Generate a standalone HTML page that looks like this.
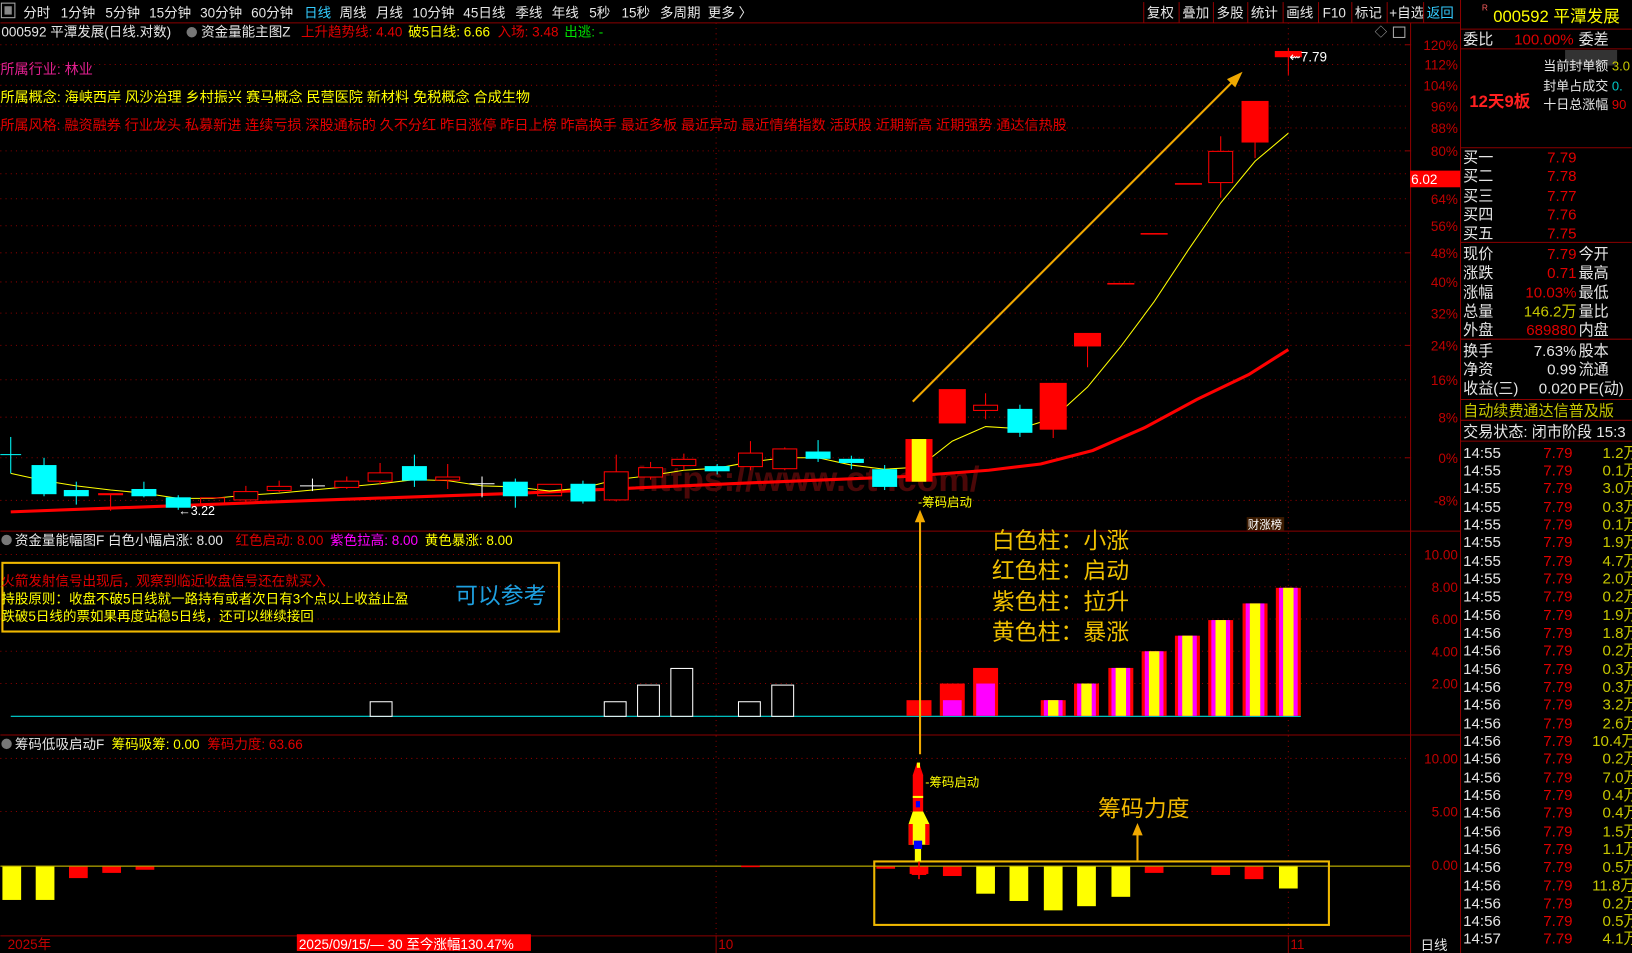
<!DOCTYPE html>
<html><head><meta charset="utf-8"><style>
html,body{margin:0;padding:0;background:#000;overflow:hidden}
svg{display:block}
text{font-family:"Liberation Sans","Noto Sans CJK SC",sans-serif}
</style></head><body>
<svg width="1632" height="953" viewBox="0 0 1568 916" xmlns="http://www.w3.org/2000/svg">
<rect width="1568" height="916" fill="#000"/>
<!-- toolbar -->
<g font-size="13" fill="#e6e6e6">
<rect x="1" y="3" width="13" height="14" fill="none" stroke="#aaa"/><rect x="4" y="6" width="7" height="8" fill="#888"/>
<text x="22" y="17">分时</text><text x="58" y="17">1分钟</text><text x="101" y="17">5分钟</text><text x="143" y="17">15分钟</text><text x="192" y="17">30分钟</text><text x="241" y="17">60分钟</text>
<text x="292" y="17" fill="#33ccff">日线</text><text x="326" y="17">周线</text><text x="361" y="17">月线</text><text x="396" y="17">10分钟</text><text x="445" y="17">45日线</text><text x="495" y="17">季线</text><text x="530" y="17">年线</text><text x="566" y="17">5秒</text><text x="597" y="17">15秒</text><text x="634" y="17">多周期</text><text x="680" y="17">更多 〉</text>
<text x="1102" y="17">复权</text><text x="1136" y="17">叠加</text><text x="1169" y="17">多股</text><text x="1202" y="17">统计</text><text x="1236" y="17">画线</text><text x="1271" y="17">F10</text><text x="1302" y="17">标记</text><text x="1335" y="17">+自选</text><text x="1371" y="17" fill="#33ccff">返回</text>
</g>
<g stroke="#8b0000" stroke-width="1">
<line x1="0" y1="22" x2="1403" y2="22"/>
<line x1="1099" y1="2" x2="1099" y2="22"/><line x1="1133" y1="2" x2="1133" y2="22"/><line x1="1166" y1="2" x2="1166" y2="22"/><line x1="1199" y1="2" x2="1199" y2="22"/><line x1="1233" y1="2" x2="1233" y2="22"/><line x1="1267" y1="2" x2="1267" y2="22"/><line x1="1299" y1="2" x2="1299" y2="22"/><line x1="1333" y1="2" x2="1333" y2="22"/><line x1="1368" y1="2" x2="1368" y2="22"/>
<line x1="1355.5" y1="22" x2="1355.5" y2="916"/>
<line x1="1403.5" y1="0" x2="1403.5" y2="916"/>
<line x1="0" y1="510.5" x2="1403" y2="510.5"/>
<line x1="0" y1="706.5" x2="1403" y2="706.5"/>
<line x1="0" y1="899.5" x2="1355" y2="899.5"/>
</g>
<!-- grid dotted -->
<g stroke="#8b0000" stroke-dasharray="1,4" stroke-width="1">
<line x1="0" y1="43" x2="1355" y2="43"/><line x1="0" y1="62" x2="1355" y2="62"/><line x1="0" y1="82" x2="1355" y2="82"/><line x1="0" y1="102" x2="1355" y2="102"/><line x1="0" y1="123" x2="1355" y2="123"/><line x1="0" y1="145" x2="1355" y2="145"/><line x1="0" y1="167" x2="1355" y2="167"/><line x1="0" y1="191" x2="1355" y2="191"/><line x1="0" y1="217" x2="1355" y2="217"/><line x1="0" y1="243" x2="1355" y2="243"/><line x1="0" y1="271" x2="1355" y2="271"/><line x1="0" y1="301" x2="1355" y2="301"/><line x1="0" y1="332" x2="1355" y2="332"/><line x1="0" y1="365" x2="1355" y2="365"/><line x1="0" y1="401" x2="1355" y2="401"/><line x1="0" y1="440" x2="1355" y2="440"/><line x1="0" y1="481" x2="1355" y2="481"/>
<line x1="0" y1="533" x2="1355" y2="533"/><line x1="0" y1="564" x2="1355" y2="564"/><line x1="0" y1="595" x2="1355" y2="595"/><line x1="0" y1="626" x2="1355" y2="626"/><line x1="0" y1="657" x2="1355" y2="657"/>
<line x1="0" y1="729" x2="1355" y2="729"/><line x1="0" y1="780" x2="1355" y2="780"/>
<line x1="688" y1="22" x2="688" y2="899"/><line x1="1238" y1="22" x2="1238" y2="899"/>
</g>
<!-- axis labels -->
<g font-size="13" fill="#c00000" text-anchor="end">
<text x="1401" y="48">120%</text><text x="1401" y="67">112%</text><text x="1401" y="87">104%</text><text x="1401" y="107">96%</text><text x="1401" y="128">88%</text><text x="1401" y="150">80%</text><text x="1401" y="196">64%</text><text x="1401" y="222">56%</text><text x="1401" y="248">48%</text><text x="1401" y="276">40%</text><text x="1401" y="306">32%</text><text x="1401" y="337">24%</text><text x="1401" y="370">16%</text><text x="1401" y="406">8%</text><text x="1401" y="445">0%</text><text x="1401" y="486">-8%</text>
<text x="1401" y="538">10.00</text><text x="1401" y="569">8.00</text><text x="1401" y="600">6.00</text><text x="1401" y="631">4.00</text><text x="1401" y="662">2.00</text>
<text x="1401" y="734">10.00</text><text x="1401" y="785">5.00</text><text x="1401" y="836">0.00</text>
</g>
<rect x="1355" y="164" width="48" height="16" fill="#ff0000"/><text x="1356" y="177" font-size="13" fill="#fff">6.02</text>
<g stroke="#8b0000"><line x1="1350" y1="43" x2="1356" y2="43"/><line x1="1350" y1="145" x2="1356" y2="145"/><line x1="1350" y1="243" x2="1356" y2="243"/><line x1="1350" y1="332" x2="1356" y2="332"/><line x1="1350" y1="440" x2="1356" y2="440"/></g>
<text x="1321" y="35" font-size="12" fill="#aaa">◇</text><rect x="1339" y="26" width="11" height="10" fill="none" stroke="#aaa"/>
<!-- header texts -->
<g font-size="13">
<text x="1" y="35" fill="#e6e6e6">000592 平潭发展(日线.对数)</text>
<circle cx="184" cy="31" r="5" fill="#777"/>
<text x="193" y="35" fill="#e6e6e6">资金量能主图Z</text>
<text x="289" y="35" fill="#e00000">上升趋势线: 4.40</text>
<text x="392" y="35" fill="#ffff00">破5日线: 6.66</text>
<text x="478" y="35" fill="#e00000">入场: 3.48</text>
<text x="542" y="35" fill="#00e000">出逃: -</text>
</g>
<g font-size="13.6">
<text x="0" y="71" fill="#e0208f">所属行业: 林业</text>
<text x="0" y="98" fill="#ffff00">所属概念: 海峡西岸 风沙治理 乡村振兴 赛马概念 民营医院 新材料 免税概念 合成生物</text>
<text x="0" y="125" fill="#e00000" textLength="1025" lengthAdjust="spacing">所属风格: 融资融券 行业龙头 私募新进 连续亏损 深股通标的 久不分红 昨日涨停 昨日上榜 昨高换手 最近多板 最近异动 最近情绪指数 活跃股 近期新高 近期强势 通达信热股</text>
</g>
<!-- watermark -->
<text x="612" y="472" font-size="34" fill="#4a0808" font-weight="bold">https://www.ct        .com/</text>
<!-- trend red line -->
<polyline fill="none" stroke="#ff0000" stroke-width="3" points="10,492 170,486 300,481 500,474 700,465 870,458 950,452 1000,446 1050,433 1100,411 1150,384 1200,360 1238,336"/>
<!-- MA5 -->
<polyline fill="none" stroke="#ffff00" stroke-width="1" points="10,455 42,462 73,467 106,471 138,474 171,479 204,479 236,476 268,474 300,471 333,468 365,465 398,461 430,462 463,467 495,468 528,472 560,469 592,461 625,457 657,452 689,450 721,444 754,440 786,440 818,447 850,451 883,449 915,424 947,410 980,412 1012,402 1045,372 1077,333 1109,290 1142,240 1173,195 1206,155 1238,128"/>
<!-- candles -->
<g stroke-width="1">
<g stroke="#00ffff"><line x1="10" y1="420" x2="10" y2="455"/><line x1="0" y1="437" x2="20" y2="437"/></g>
<line x1="42" y1="440" x2="42" y2="477" stroke="#00ffff"/><rect x="30" y="447" width="24" height="28" fill="#00ffff"/>
<line x1="73" y1="463" x2="73" y2="485" stroke="#00ffff"/><rect x="61" y="471" width="24" height="6" fill="#00ffff"/>
<line x1="106" y1="475" x2="106" y2="491" stroke="#ff0000"/><rect x="94" y="474" width="24" height="2" fill="#ff0000"/>
<line x1="138" y1="463" x2="138" y2="478" stroke="#00ffff"/><rect x="126" y="470" width="24" height="7" fill="#00ffff"/>
<line x1="171" y1="476" x2="171" y2="490" stroke="#00ffff"/><rect x="159" y="478" width="24" height="10" fill="#00ffff"/>
<g fill="none" stroke="#ff0000">
<rect x="192.5" y="478.5" width="23" height="6"/>
<line x1="236" y1="467" x2="236" y2="484"/><rect x="224.5" y="472.5" width="23" height="8" fill="#000"/>
<line x1="268" y1="462" x2="268" y2="473"/><rect x="256.5" y="467.5" width="23" height="4" fill="#000"/>
<line x1="333" y1="458" x2="333" y2="470"/><rect x="321.5" y="462.5" width="23" height="6" fill="#000"/>
<line x1="365" y1="445" x2="365" y2="466"/><rect x="353.5" y="454.5" width="23" height="8" fill="#000"/>
<line x1="430" y1="446" x2="430" y2="470"/><rect x="418.5" y="458.5" width="23" height="3" fill="#000"/>
<rect x="516.5" y="465.5" width="23" height="11"/>
<line x1="592" y1="437" x2="592" y2="482"/><rect x="580.5" y="453.5" width="23" height="27" fill="#000"/>
<line x1="625" y1="444" x2="625" y2="461"/><rect x="613.5" y="449.5" width="23" height="9" fill="#000"/>
<line x1="657" y1="436" x2="657" y2="452"/><rect x="645.5" y="441.5" width="23" height="6" fill="#000"/>
<line x1="721" y1="424" x2="721" y2="452"/><rect x="709.5" y="435.5" width="23" height="13" fill="#000"/>
<line x1="754" y1="430" x2="754" y2="452"/><rect x="742.5" y="431.5" width="23" height="19" fill="#000"/>
<line x1="947" y1="378" x2="947" y2="403"/><rect x="935.5" y="389.5" width="23" height="5" fill="#000"/>
<line x1="1173" y1="131" x2="1173" y2="190"/><rect x="1161.5" y="145.5" width="23" height="30" fill="#000"/>
</g>
<g stroke="#fff"><line x1="300" y1="460" x2="300" y2="472"/><line x1="288" y1="467" x2="312" y2="467"/><line x1="463" y1="458" x2="463" y2="478"/><line x1="451" y1="465" x2="475" y2="465"/></g>
<line x1="398" y1="437" x2="398" y2="468" stroke="#00ffff"/><rect x="386" y="448" width="24" height="14" fill="#00ffff"/>
<line x1="495" y1="460" x2="495" y2="488" stroke="#00ffff"/><rect x="483" y="463" width="24" height="14" fill="#00ffff"/>
<line x1="560" y1="462" x2="560" y2="484" stroke="#00ffff"/><rect x="548" y="465" width="24" height="17" fill="#00ffff"/>
<line x1="689" y1="446" x2="689" y2="456" stroke="#00ffff"/><rect x="677" y="448" width="24" height="5" fill="#00ffff"/>
<line x1="786" y1="423" x2="786" y2="444" stroke="#00ffff"/><rect x="774" y="434" width="24" height="7" fill="#00ffff"/>
<line x1="818" y1="438" x2="818" y2="451" stroke="#00ffff"/><rect x="806" y="441" width="24" height="4" fill="#00ffff"/>
<line x1="850" y1="447" x2="850" y2="471" stroke="#00ffff"/><rect x="838" y="451" width="24" height="17" fill="#00ffff"/>
<rect x="870" y="422" width="26" height="41" fill="#ff0000"/><rect x="876" y="422" width="14" height="41" fill="#ffff00"/>
<rect x="902" y="374" width="26" height="33" fill="#ff0000"/>
<line x1="980" y1="389" x2="980" y2="420" stroke="#00ffff"/><rect x="968" y="393" width="24" height="23" fill="#00ffff"/>
<line x1="1012" y1="368" x2="1012" y2="421" stroke="#ff0000"/><rect x="999" y="368" width="26" height="45" fill="#ff0000"/>
<line x1="1045" y1="333" x2="1045" y2="353" stroke="#ff0000"/><rect x="1032" y="320" width="26" height="13" fill="#ff0000"/>
<rect x="1064" y="272" width="26" height="1.5" fill="#ff0000"/>
<rect x="1096" y="224" width="26" height="1.5" fill="#ff0000"/>
<rect x="1129" y="176" width="26" height="1.5" fill="#ff0000"/>
<line x1="1206" y1="137" x2="1206" y2="152" stroke="#ff0000"/><rect x="1193" y="97" width="26" height="40" fill="#ff0000"/>
<line x1="1238" y1="46" x2="1238" y2="72" stroke="#ff0000"/><rect x="1225" y="49" width="26" height="6" fill="#ff0000"/>
</g>
<text x="1239" y="59" font-size="13" fill="#fff">⇜7.79</text>
<text x="171" y="495" font-size="12" fill="#fff">←3.22</text>
<!-- orange arrow -->
<line x1="877" y1="386" x2="1188" y2="75" stroke="#f0a800" stroke-width="2"/>
<polygon points="1194,69 1179,76 1187,84" fill="#f0a800"/>
<text x="882" y="487" font-size="12" fill="#ffff00">-筹码启动</text>
<rect x="1198" y="497" width="36" height="13" fill="#3a1a00"/><text x="1199" y="508" font-size="11" fill="#fff">财涨榜</text>
<!-- volume pane -->
<g font-size="13">
<circle cx="6" cy="519" r="5" fill="#777"/>
<text x="14" y="524" fill="#e6e6e6">资金量能幅图F 白色小幅启涨: 8.00</text>
<text x="226" y="524" fill="#e00000">红色启动: 8.00</text>
<text x="317" y="524" fill="#ff00ff">紫色拉高: 8.00</text>
<text x="408" y="524" fill="#ffff00">黄色暴涨: 8.00</text>
</g>
<rect x="2" y="541" width="535" height="66" fill="none" stroke="#f0b800" stroke-width="2"/>
<g font-size="13">
<text x="1" y="563" fill="#e00000">火箭发射信号出现后，观察到临近收盘信号还在就买入</text>
<text x="1" y="580" fill="#ffff00">持股原则：收盘不破5日线就一路持有或者次日有3个点以上收益止盈</text>
<text x="1" y="597" fill="#ffff00">跌破5日线的票如果再度站稳5日线，还可以继续接回</text>
</g>
<text x="437" y="580" font-size="22" fill="#1ea0e0">可以参考</text>
<g font-size="22" fill="#f0c000">
<text x="953" y="527">白色柱：小涨</text>
<text x="953" y="556">红色柱：启动</text>
<text x="953" y="586">紫色柱：拉升</text>
<text x="953" y="615">黄色柱：暴涨</text>
</g>
<line x1="10" y1="688.5" x2="1250" y2="688.5" stroke="#00d8d8"/>
<g fill="#000" stroke="#fff">
<rect x="355.5" y="674.5" width="21" height="14"/><rect x="580.5" y="674.5" width="21" height="14"/><rect x="612.5" y="658.5" width="21" height="30"/><rect x="644.5" y="642.5" width="21" height="46"/><rect x="709.5" y="674.5" width="21" height="14"/><rect x="741.5" y="658.5" width="21" height="30"/>
</g>
<rect x="871" y="673" width="24" height="15" fill="#ff0000"/>
<rect x="903" y="657" width="24" height="31" fill="#ff0000"/><rect x="906" y="673" width="18" height="15" fill="#ff00ff"/>
<rect x="935" y="642" width="24" height="46" fill="#ff0000"/><rect x="938" y="657" width="18" height="31" fill="#ff00ff"/>
<g>
<rect x="1000" y="673" width="24" height="15" fill="#ff0000"/><rect x="1003" y="673" width="18" height="15" fill="#ff00ff"/><rect x="1007" y="673" width="10" height="15" fill="#ffff00"/>
<rect x="1032" y="657" width="24" height="31" fill="#ff0000"/><rect x="1035" y="657" width="18" height="31" fill="#ff00ff"/><rect x="1039" y="657" width="10" height="31" fill="#ffff00"/>
<rect x="1065" y="642" width="24" height="46" fill="#ff0000"/><rect x="1068" y="642" width="18" height="46" fill="#ff00ff"/><rect x="1072" y="642" width="10" height="46" fill="#ffff00"/>
<rect x="1097" y="626" width="24" height="62" fill="#ff0000"/><rect x="1100" y="626" width="18" height="62" fill="#ff00ff"/><rect x="1104" y="626" width="10" height="62" fill="#ffff00"/>
<rect x="1129" y="611" width="24" height="77" fill="#ff0000"/><rect x="1132" y="611" width="18" height="77" fill="#ff00ff"/><rect x="1136" y="611" width="10" height="77" fill="#ffff00"/>
<rect x="1161" y="596" width="24" height="92" fill="#ff0000"/><rect x="1164" y="596" width="18" height="92" fill="#ff00ff"/><rect x="1168" y="596" width="10" height="92" fill="#ffff00"/>
<rect x="1194" y="580" width="24" height="108" fill="#ff0000"/><rect x="1197" y="580" width="18" height="108" fill="#ff00ff"/><rect x="1201" y="580" width="10" height="108" fill="#ffff00"/>
<rect x="1226" y="565" width="24" height="123" fill="#ff0000"/><rect x="1229" y="565" width="18" height="123" fill="#ff00ff"/><rect x="1233" y="565" width="10" height="123" fill="#ffff00"/>
</g>
<!-- vertical arrow -->
<line x1="884" y1="500" x2="884" y2="725" stroke="#f0a800" stroke-width="2"/>
<polygon points="884,490 879,502 889,502" fill="#f0a800"/>
<!-- third pane -->
<g font-size="13">
<circle cx="6" cy="715" r="5" fill="#777"/>
<text x="14" y="720" fill="#e6e6e6">筹码低吸启动F</text>
<text x="107" y="720" fill="#ffff00">筹码吸筹: 0.00</text>
<text x="199" y="720" fill="#e00000">筹码力度: 63.66</text>
</g>
<line x1="0" y1="832.5" x2="1355" y2="832.5" stroke="#e0d000"/>
<rect x="2" y="833" width="18" height="32" fill="#ffff00"/><rect x="34" y="833" width="18" height="32" fill="#ffff00"/>
<rect x="66" y="833" width="18" height="11" fill="#ff0000"/><rect x="98" y="833" width="18" height="6" fill="#ff0000"/><rect x="130" y="833" width="18" height="3" fill="#ff0000"/>
<rect x="712" y="832" width="18" height="1.5" fill="#ff0000"/>
<rect x="842" y="833" width="18" height="2" fill="#ff0000"/>
<rect x="874" y="833" width="18" height="7" fill="#ff0000"/>
<rect x="906" y="833" width="18" height="9" fill="#ff0000"/>
<rect x="938" y="833" width="18" height="26" fill="#ffff00"/>
<rect x="970" y="833" width="18" height="33" fill="#ffff00"/>
<rect x="1003" y="833" width="18" height="42" fill="#ffff00"/>
<rect x="1035" y="833" width="18" height="38" fill="#ffff00"/>
<rect x="1068" y="833" width="18" height="29" fill="#ffff00"/>
<rect x="1100" y="833" width="18" height="6" fill="#ff0000"/>
<rect x="1164" y="833" width="18" height="8" fill="#ff0000"/>
<rect x="1196" y="833" width="18" height="12" fill="#ff0000"/>
<rect x="1229" y="833" width="18" height="21" fill="#ffff00"/>
<rect x="840" y="828" width="437" height="61" fill="none" stroke="#f0b800" stroke-width="2"/>
<!-- rocket -->
<g>
<line x1="883" y1="733" x2="883" y2="845" stroke="#ff0000" stroke-width="1.5"/>
<polygon points="883,733 887,745 887,780 877,780 877,745 881,733" fill="#ff0000"/>
<rect x="881" y="733" width="3" height="5" fill="#ffff00"/>
<rect x="877" y="765" width="10" height="2" fill="#ffff00"/>
<rect x="880" y="770" width="4" height="6" fill="#0000ff"/>
<polygon points="877,780 887,780 893,792 893,812 873,812 873,792" fill="#ffff00"/>
<rect x="873" y="792" width="4" height="20" fill="#ff0000"/><rect x="889" y="792" width="4" height="20" fill="#ff0000"/>
<rect x="878" y="808" width="8" height="8" fill="#0000ff"/>
<rect x="879" y="816" width="6" height="12" fill="#ffff00"/>
<rect x="876" y="835" width="14" height="6" fill="#ff0000"/>
</g>
<text x="889" y="756" font-size="12" fill="#ffff00">-筹码启动</text>
<text x="1055" y="785" font-size="22" fill="#f0b800">筹码力度</text>
<line x1="1093" y1="800" x2="1093" y2="827" stroke="#f0a800" stroke-width="2"/>
<polygon points="1093,791 1088,803 1098,803" fill="#f0a800"/>
<!-- bottom axis -->
<text x="7" y="912" font-size="13" fill="#c00000">2025年</text>
<rect x="285" y="898" width="225" height="16" fill="#ff0000"/>
<text x="287" y="912" font-size="13" fill="#fff">2025/09/15/— 30 至今涨幅130.47%</text>
<line x1="688" y1="899" x2="688" y2="916" stroke="#8b0000"/><text x="690" y="912" font-size="13" fill="#c00000">10</text>
<line x1="1238" y1="899" x2="1238" y2="916" stroke="#8b0000"/><text x="1240" y="912" font-size="13" fill="#c00000">11</text>
<text x="1365" y="913" font-size="13" fill="#e6e6e6">日线</text>
<!-- right panel -->
<text x="1424" y="10" font-size="8" fill="#ff6060">R</text>
<text x="1435" y="21" font-size="16" fill="#ffff00">000592 平潭发展</text>
<g stroke="#8b0000"><line x1="1403" y1="28" x2="1568" y2="28"/><line x1="1403" y1="47" x2="1568" y2="47"/><line x1="1403" y1="142" x2="1568" y2="142"/><line x1="1403" y1="233" x2="1568" y2="233"/><line x1="1403" y1="326" x2="1568" y2="326"/><line x1="1403" y1="384" x2="1568" y2="384"/><line x1="1403" y1="404" x2="1568" y2="404"/><line x1="1403" y1="424" x2="1568" y2="424"/></g>
<g font-size="14.5">
<text x="1406" y="43" fill="#e6e6e6">委比</text><text x="1455" y="43" fill="#e00000">100.00%</text><text x="1517" y="43" fill="#e6e6e6">委差</text>
</g>
<path d="M1554 48 h-50 v10 q0 5 5 5 h40 q5 0 5 -5z" fill="#333"/>
<text x="1412" y="103" font-size="16" font-weight="bold" fill="#ff2020">12天9板</text>
<g font-size="12.5" fill="#e6e6e6">
<text x="1483" y="68">当前封单额 <tspan fill="#c8c800">3.0</tspan></text>
<text x="1483" y="87">封单占成交 <tspan fill="#00c8c8">0.</tspan></text>
<text x="1483" y="105">十日总涨幅 <tspan fill="#e00000">90</tspan></text>
</g>
<g font-size="14.5" fill="#e6e6e6">
<text x="1406" y="156">买一</text><text x="1406" y="174">买二</text><text x="1406" y="193">买三</text><text x="1406" y="211">买四</text><text x="1406" y="229">买五</text>
<text x="1406" y="249">现价</text><text x="1406" y="267">涨跌</text><text x="1406" y="286">涨幅</text><text x="1406" y="304">总量</text><text x="1406" y="322">外盘</text>
<text x="1517" y="249">今开</text><text x="1517" y="267">最高</text><text x="1517" y="286">最低</text><text x="1517" y="304">量比</text><text x="1517" y="322">内盘</text>
<text x="1406" y="342">换手</text><text x="1406" y="360">净资</text><text x="1406" y="378">收益(三)</text>
<text x="1515" y="342" text-anchor="end">7.63%</text><text x="1515" y="360" text-anchor="end">0.99</text><text x="1515" y="378" text-anchor="end">0.020</text>
<text x="1517" y="342">股本</text><text x="1517" y="360">流通</text><text x="1517" y="378">PE(动)</text>
<text x="1406" y="420">交易状态: 闭市阶段 15:3</text>
</g>
<g font-size="14.5" fill="#e00000" text-anchor="end">
<text x="1515" y="156">7.79</text><text x="1515" y="174">7.78</text><text x="1515" y="193">7.77</text><text x="1515" y="211">7.76</text><text x="1515" y="229">7.75</text>
<text x="1515" y="249">7.79</text><text x="1515" y="267">0.71</text><text x="1515" y="286">10.03%</text><text x="1515" y="304" fill="#c8c800">146.2万</text><text x="1515" y="322">689880</text>
</g>
<text x="1406" y="400" font-size="14.5" fill="#c8c800">自动续费通达信普及版</text>
<g font-size="14.5">
<g fill="#e6e6e6">
<text x="1406" y="440">14:55</text><text x="1406" y="457">14:55</text><text x="1406" y="474">14:55</text><text x="1406" y="492">14:55</text><text x="1406" y="509">14:55</text><text x="1406" y="526">14:55</text><text x="1406" y="544">14:55</text><text x="1406" y="561">14:55</text><text x="1406" y="578">14:55</text>
<text x="1406" y="596">14:56</text><text x="1406" y="613">14:56</text><text x="1406" y="630">14:56</text><text x="1406" y="648">14:56</text><text x="1406" y="665">14:56</text><text x="1406" y="682">14:56</text><text x="1406" y="700">14:56</text><text x="1406" y="717">14:56</text><text x="1406" y="734">14:56</text><text x="1406" y="752">14:56</text><text x="1406" y="769">14:56</text><text x="1406" y="786">14:56</text><text x="1406" y="804">14:56</text><text x="1406" y="821">14:56</text><text x="1406" y="838">14:56</text><text x="1406" y="856">14:56</text><text x="1406" y="873">14:56</text><text x="1406" y="890">14:56</text><text x="1406" y="907">14:57</text>
</g>
<g fill="#e00000">
<text x="1483" y="440">7.79</text><text x="1483" y="457">7.79</text><text x="1483" y="474">7.79</text><text x="1483" y="492">7.79</text><text x="1483" y="509">7.79</text><text x="1483" y="526">7.79</text><text x="1483" y="544">7.79</text><text x="1483" y="561">7.79</text><text x="1483" y="578">7.79</text><text x="1483" y="596">7.79</text><text x="1483" y="613">7.79</text><text x="1483" y="630">7.79</text><text x="1483" y="648">7.79</text><text x="1483" y="665">7.79</text><text x="1483" y="682">7.79</text><text x="1483" y="700">7.79</text><text x="1483" y="717">7.79</text><text x="1483" y="734">7.79</text><text x="1483" y="752">7.79</text><text x="1483" y="769">7.79</text><text x="1483" y="786">7.79</text><text x="1483" y="804">7.79</text><text x="1483" y="821">7.79</text><text x="1483" y="838">7.79</text><text x="1483" y="856">7.79</text><text x="1483" y="873">7.79</text><text x="1483" y="890">7.79</text><text x="1483" y="907">7.79</text>
</g>
<g fill="#c8c800">
<text x="1540" y="440">1.2万</text><text x="1540" y="457">0.1万</text><text x="1540" y="474">3.0万</text><text x="1540" y="492">0.3万</text><text x="1540" y="509">0.1万</text><text x="1540" y="526">1.9万</text><text x="1540" y="544">4.7万</text><text x="1540" y="561">2.0万</text><text x="1540" y="578">0.2万</text><text x="1540" y="596">1.9万</text><text x="1540" y="613">1.8万</text><text x="1540" y="630">0.2万</text><text x="1540" y="648">0.3万</text><text x="1540" y="665">0.3万</text><text x="1540" y="682">3.2万</text><text x="1540" y="700">2.6万</text><text x="1530" y="717">10.4万</text><text x="1540" y="734">0.2万</text><text x="1540" y="752">7.0万</text><text x="1540" y="769">0.4万</text><text x="1540" y="786">0.4万</text><text x="1540" y="804">1.5万</text><text x="1540" y="821">1.1万</text><text x="1540" y="838">0.5万</text><text x="1530" y="856">11.8万</text><text x="1540" y="873">0.2万</text><text x="1540" y="890">0.5万</text><text x="1540" y="907">4.1万</text>
</g>
</g>
</svg>
</body></html>
